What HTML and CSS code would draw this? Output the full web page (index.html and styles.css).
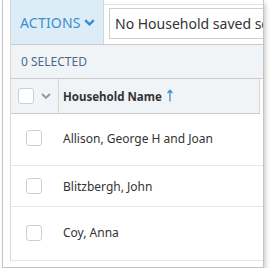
FILE: index.html
```html
<!DOCTYPE html>
<html lang="en">
<head>
   <meta charset="UTF-8">
   <title>Households</title>
   <link rel="stylesheet" href="styles.css">
</head>
<body>
   <div class="frame">
      <div class="grid">
         <div class="toolbar">
            <div class="actions">
               ACTIONS
               <svg class="chev-blue" width="11" height="7" viewBox="0 0 11 7"><polyline points="1.2,1.2 5.5,5.4 9.8,1.2" fill="none" stroke="#3a8fd0" stroke-width="2.4"/></svg>
            </div>
            <div class="search">
               <div class="search-box">No Household saved search selected</div>
            </div>
         </div>

         <div class="selected-bar">0 SELECTED</div>

         <div class="head-row">
            <div class="head-check">
               <span class="checkbox"></span>
               <svg class="chev-gray" width="10" height="6" viewBox="0 0 10 6"><polyline points="1,1 5,4.8 9,1" fill="none" stroke="#9b9b9b" stroke-width="2"/></svg>
            </div>
            <div class="head-name">
               Household Name
               <svg class="sort" width="6" height="13" viewBox="0 0 6 13"><path d="M3 1.5 V12.5 M0.6 4 L3 1.3 L5.4 4" fill="none" stroke="#3a8fd0" stroke-width="1.3"/></svg>
            </div>
         </div>

         <div class="row row-1">
            <span class="checkbox"></span>
            <span class="name">Allison, George H and Joan</span>
         </div>
         <div class="row row-2">
            <span class="checkbox"></span>
            <span class="name">Blitzbergh, John</span>
         </div>
         <div class="row row-3">
            <span class="checkbox"></span>
            <span class="name">Coy, Anna</span>
         </div>
      </div>
   </div>
</body>
</html>
```

FILE: styles.css
```css
* {
   margin: 0;
   padding: 0;
   box-sizing: border-box;
}

body {
   background: #fff;
   font-family: 'Noto Sans', 'Open Sans', sans-serif;
   color: #333;
}

.frame {
   width: 262px;
   height: 268px;
   margin-left: 2px;
   border: 1px solid #c4c4c4;
   border-top: none;
   box-shadow: 2px 3px 4px rgba(0, 0, 0, 0.18);
   padding: 0 0 6px 7px;
   overflow: hidden;
}

.grid {
   height: 100%;
   border-left: 1px solid #d9d9d9;
   overflow: hidden;
}

/* top toolbar */
.toolbar {
   display: flex;
   height: 45px;
   border-bottom: 1px solid #c9c9c9;
}

.actions {
   flex: 0 0 93px;
   background: #dcedf8;
   border-right: 1px solid #cfd6dc;
   color: #3a8fd0;
   font-size: 14px;
   letter-spacing: 0.2px;
   display: flex;
   align-items: center;
   padding-left: 9px;
   gap: 3px;
}

.chev-blue {
   margin-top: 1px;
}

.search {
   flex: 1;
   padding: 8px 0 5px 5px;
   background: linear-gradient(#fff 4px, #e2e2e2 4px, #e2e2e2 5px, #fff 5px);
}

.search-box {
   height: 100%;
   width: 240px;
   border: 1px solid #cfcfcf;
   background: #fff;
   font-size: 14px;
   white-space: nowrap;
   display: flex;
   align-items: center;
   padding-left: 5px;
}

/* selection bar */
.selected-bar {
   height: 34px;
   background: #f1f4f7;
   border-bottom: 1px solid #cdcdcd;
   color: #4b6a8a;
   font-size: 12px;
   display: flex;
   align-items: center;
   padding-left: 10px;
}

/* header */
.head-row {
   display: flex;
   width: 249px;
   height: 35px;
   background: #f1f4f7;
   border-bottom: 1px solid #cbcbcb;
   border-right: 1px solid #d6d6d6;
}

.head-check {
   flex: 0 0 48px;
   border-right: 1px solid #d6d6d6;
   display: flex;
   align-items: center;
   padding-left: 7px;
   gap: 7px;
}

.head-name {
   font-size: 11.5px;
   font-weight: bold;
   display: flex;
   align-items: center;
   padding-left: 4px;
   gap: 5px;
}

.sort {
   margin-top: -2px;
}

.checkbox {
   display: inline-block;
   width: 16px;
   height: 16px;
   border: 1px solid #cfcfcf;
   border-radius: 3px;
   background: #fff;
}

/* rows */
.row {
   display: flex;
   align-items: center;
   border-bottom: 1px solid #e8e8e8;
   padding-left: 15px;
   gap: 21px;
   font-size: 12px;
}

.row-1 {
   height: 52px;
   padding-bottom: 3px;
}

.row-2 {
   height: 41px;
}

.row-3 {
   height: 54px;
   padding-bottom: 2px;
}
```
